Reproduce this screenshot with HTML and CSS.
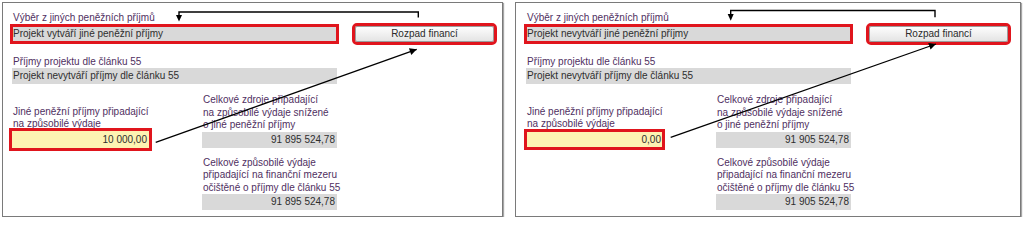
FILE: index.html
```html
<!DOCTYPE html>
<html lang="cs">
<head>
<meta charset="utf-8">
<title>Jiné peněžní příjmy</title>
<link rel="stylesheet" href="styles.css">
</head>
<body>
<div class="sheet">
  <section class="panel">
    <div class="label">Výběr z jiných peněžních příjmů</div>
    <div class="top-row">
      <div class="field field--long mark mark--tight">Projekt vytváří jiné peněžní příjmy</div>
      <button class="btn mark" type="button">Rozpad financí</button>
    </div>
    <div class="label label--spaced">Příjmy projektu dle článku 55</div>
    <div class="field field--long">Projekt nevytváří příjmy dle článku 55</div>
    <div class="grid">
      <div class="block block--left">
        <div class="label">Jiné peněžní příjmy připadající<br>na způsobilé výdaje</div>
        <div class="field field--input mark">10 000,00</div>
      </div>
      <div class="block">
        <div class="label">Celkové zdroje připadající<br>na způsobilé výdaje snížené<br>o jiné peněžní příjmy</div>
        <div class="field field--num">91 895 524,78</div>
      </div>
      <div class="block block--second">
        <div class="label">Celkové způsobilé výdaje<br>připadající na finanční mezeru<br>očištěné o příjmy dle článku 55</div>
        <div class="field field--num">91 895 524,78</div>
      </div>
    </div>
    <svg class="notes" viewBox="0 0 499 213" width="499" height="213">
      <defs>
        <marker id="ah1" viewBox="0 0 10 10" refX="10" refY="5" markerWidth="9" markerHeight="7" markerUnits="userSpaceOnUse" orient="auto">
          <path d="M0 0 L10 5 L0 10 Z" fill="#000"/>
        </marker>
      </defs>
      <polyline points="415.3,14.5 415.3,9 176,9 176,12.5" fill="none" stroke="#000" stroke-width="1.4"/>
      <polygon points="173,12 179,12 176,18.5" fill="#000"/>
      <line x1="152.7" y1="139.3" x2="413.7" y2="46.3" stroke="#000" stroke-width="1.3" marker-end="url(#ah1)"/>
    </svg>
  </section>

  <section class="panel panel--wide">
    <div class="label">Výběr z jiných peněžních příjmů</div>
    <div class="top-row">
      <div class="field field--long mark mark--tight">Projekt nevytváří jiné peněžní příjmy</div>
      <button class="btn mark" type="button">Rozpad financí</button>
    </div>
    <div class="label label--spaced">Příjmy projektu dle článku 55</div>
    <div class="field field--long">Projekt nevytváří příjmy dle článku 55</div>
    <div class="grid">
      <div class="block block--left">
        <div class="label">Jiné peněžní příjmy připadající<br>na způsobilé výdaje</div>
        <div class="field field--input mark mark--tight">0,00</div>
      </div>
      <div class="block">
        <div class="label">Celkové zdroje připadající<br>na způsobilé výdaje snížené<br>o jiné peněžní příjmy</div>
        <div class="field field--num">91 905 524,78</div>
      </div>
      <div class="block block--second">
        <div class="label">Celkové způsobilé výdaje<br>připadající na finanční mezeru<br>očištěné o příjmy dle článku 55</div>
        <div class="field field--num">91 905 524,78</div>
      </div>
    </div>
    <svg class="notes" viewBox="0 0 504 213" width="504" height="213">
      <defs>
        <marker id="ah2" viewBox="0 0 10 10" refX="10" refY="5" markerWidth="9" markerHeight="7" markerUnits="userSpaceOnUse" orient="auto">
          <path d="M0 0 L10 5 L0 10 Z" fill="#000"/>
        </marker>
      </defs>
      <polyline points="419,14.3 419,7.5 214.7,7.5 214.7,11.5" fill="none" stroke="#000" stroke-width="1.4"/>
      <polygon points="211.7,11 217.7,11 214.7,17.7" fill="#000"/>
      <line x1="154.7" y1="134.3" x2="420" y2="41" stroke="#000" stroke-width="1.3" marker-end="url(#ah2)"/>
    </svg>
  </section>
</div>
</body>
</html>
```

FILE: styles.css
```css
* {
  box-sizing: border-box;
}

body {
  margin: 0;
  background: #ffffff;
  font-family: "Liberation Sans", Arial, sans-serif;
  font-size: 10px;
}

.sheet {
  display: flex;
  gap: 12px;
  padding: 2px 0 0 2px;
}

.panel {
  position: relative;
  width: 501px;
  height: 215px;
  border: 1px solid #7a7a7a;
  box-shadow: 1px 1px 1px #a6a6a6;
  padding: 9px 0 0 9px;
  background: #ffffff;
}

.panel--wide {
  width: 506px;
  padding-left: 10px;
}

.label {
  color: #50305f;
  line-height: 12.5px;
  padding-left: 1px;
  white-space: nowrap;
}

.label--spaced {
  margin-top: 13.5px;
}

.top-row {
  display: flex;
  gap: 18px;
  margin-top: 1.5px;
}

.field {
  height: 16px;
  line-height: 16px;
  background: #d9d9d9;
  color: #2e2e2e;
  padding: 0 1px;
  white-space: nowrap;
}

.field--long {
  width: 325px;
}

.field--num {
  text-align: right;
  padding-right: 2px;
}

.field--input {
  width: 137px;
  height: 17px;
  line-height: 17px;
  background: #fdf3b3;
  text-align: right;
  padding-right: 2px;
}

.btn {
  width: 139px;
  height: 16px;
  padding: 0;
  border: 1px solid #9c9c9c;
  border-radius: 2px;
  background: linear-gradient(#fdfdfd, #e4e4e4);
  font: inherit;
  color: #2b2b2b;
  line-height: 14px;
  text-align: center;
}

.mark {
  outline: 3px solid #e0151d;
}

.mark--tight {
  outline-offset: -1px;
}

.grid {
  display: grid;
  grid-template-columns: 140px 135px;
  column-gap: 50px;
  row-gap: 9px;
  margin-top: 10.25px;
}

.block--left {
  align-self: end;
}

.block--second {
  grid-column: 2;
}

.notes {
  position: absolute;
  top: 0;
  left: 0;
  pointer-events: none;
  overflow: visible;
}
```
